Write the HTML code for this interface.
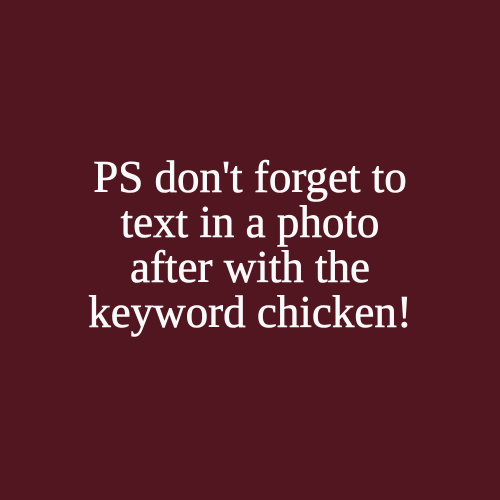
<!DOCTYPE html>
<html><head><style>
html,body{margin:0;padding:0;}
body{width:500px;height:500px;background:#521621;position:relative;overflow:hidden;}
.t{position:absolute;left:0;right:0;top:155px;text-align:center;color:#fafafa;font-family:"Liberation Serif",serif;font-size:45px;line-height:45px;-webkit-text-stroke:0.6px #fafafa;}
</style></head><body>
<div class="t">PS don't forget to<br>text in a photo<br>after with the<br>keyword chicken!</div>
</body></html>
